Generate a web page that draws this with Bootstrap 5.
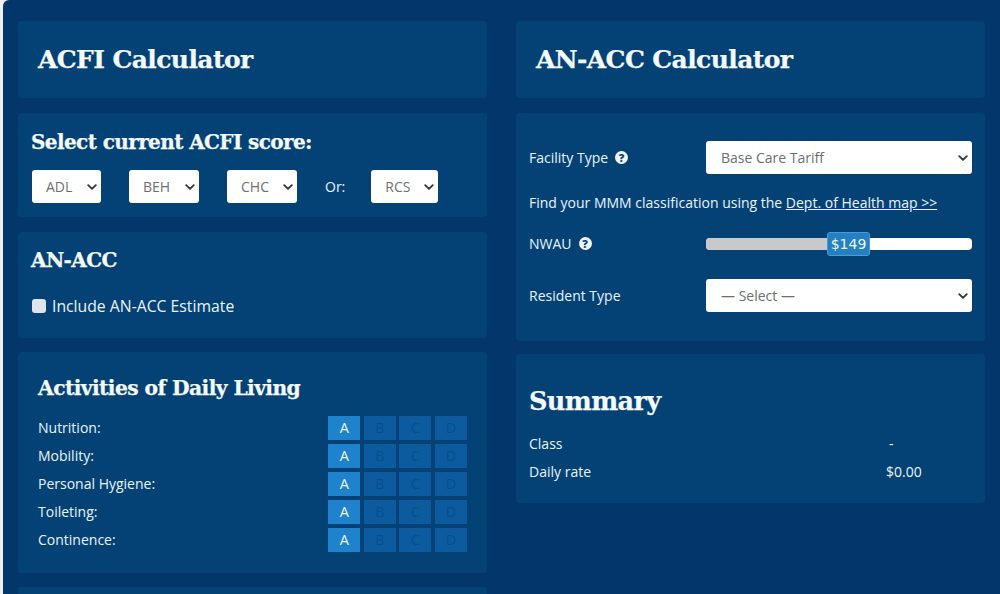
<!doctype html>
<html lang="en"><head><meta charset="utf-8"><title>Calculator</title>
<link href="https://cdn.jsdelivr.net/npm/bootstrap@5.3.0/dist/css/bootstrap.min.css" rel="stylesheet">
<style>
html,body{height:594px;overflow:hidden;background:#eef0f2}
body{font-family:"Open Sans",sans-serif;font-size:14px;color:#e8f4fb}
.shell{margin-left:3px;height:594px;background:#03366a;padding:21px 15px 0;border-top-left-radius:6px;overflow:hidden}
.cols{--bs-gutter-x:29px}
.pane{background:#044276;border-radius:4px;margin-bottom:15px}
.serif{font-family:"DejaVu Serif",Georgia,serif;font-weight:700;color:#f4fafd;margin:0;letter-spacing:-.6px;-webkit-text-stroke:.25px #f4fafd}
.pane-title{height:77px;padding:0 20px;display:flex;align-items:center}
.pane-title .serif{font-size:25px}
.pane-score{height:104px;padding:17px 14px 0}
.pane-score .serif{font-size:20px;line-height:24px;margin-left:-1px}
.pick-row{display:flex;align-items:center;gap:28px;margin-top:16px}
.form-select.pick,.form-select.wide{height:33px;font-size:14px;color:#6c6f72;border:0;border-radius:3px;background-image:url("data:image/svg+xml,%3csvg xmlns='http://www.w3.org/2000/svg' viewBox='0 0 16 12'%3e%3cpath fill='none' stroke='%23343a40' stroke-linecap='round' stroke-linejoin='round' stroke-width='3' d='m2 3 6 6 6-6'/%3e%3c/svg%3e");background-position:right 4px center;background-size:10px 8px}
.form-select.pick{padding:0 0 0 14px}
.w-a{width:69px}.w-b{width:70px}.w-c{width:67px}
.or-lbl{margin:0 -2px 0 0}
.pane-anacc{height:106px;margin-bottom:14px;padding:16px 14px 0}
.pane-anacc .serif{font-size:20px;line-height:24px;margin-left:-1px}
.check-row{display:flex;align-items:center;gap:6px;margin-top:23px;font-size:15.75px;line-height:22px}
.form-check-input.tick{width:14px;height:14px;margin:0;background-color:#dfe3ea;border:0;border-radius:3px;float:none}
.pane-adl{height:221px;margin-bottom:14px;padding:23px 20px 0}
.pane-adl .serif{font-size:20.3px;line-height:26px;margin-bottom:15px}
.adl-row{display:flex;justify-content:space-between;align-items:center;height:24px;margin-bottom:4px}
.adl-row>span{padding-bottom:2px}
.grades{display:grid;grid-template-columns:repeat(4,32px);gap:3.6px}
.grade{height:24px;display:flex;align-items:center;justify-content:center;background:#0b5b9e;color:#0a4f8c;font-size:14.5px}
.grade.on{background:#1e82cc;color:#eef8fd}
.pane-stub{height:40px;margin:0}
.pane-form{height:228px;margin-bottom:13px;padding:28px 13px 0}
.form-line{display:flex;align-items:center}
.form-lbl{width:177px;flex:none;display:flex;align-items:center;gap:7px}
.form-select.wide{padding:0 0 0 15px}
.form-lbl+.form-select{width:266px}
.hint{margin:18px 0 0;line-height:22px}
.hint a{color:#e8f4fb}
.line-nwau{margin-top:19px}
.line-res{margin-top:25px}
.help{width:13px;height:13px;border-radius:50%;background:#f2f8fb;color:#044276;font:800 11px/13px "Open Sans",sans-serif;text-align:center;display:inline-block}
.slider{position:relative;width:266px;height:12px;background:#fff;border-radius:4px}
.slider-fill{height:12px;background:#c8c9cb;border-radius:4px 0 0 4px}
.slider-tip{position:absolute;left:121px;top:-6px;width:43px;height:24px;background:#2580c3;border:1px solid #4a9ad6;border-radius:3px;color:#eef8fd;font:14px/22px "DejaVu Sans",sans-serif;text-align:center}
.pane-sum{height:149px;padding:29px 13px 0}
.pane-sum .serif{font-size:25.5px;line-height:36px;margin-bottom:10px}
.sum-row{display:flex;height:28px;align-items:center}
.sum-row span:first-child{width:357px}
.dash{padding-left:3px}
</style></head>
<body>
<div class="shell">
<div class="row cols">
  <div class="col-6">
    <div class="pane pane-title"><h1 class="serif">ACFI Calculator</h1></div>
    <div class="pane pane-score">
      <h2 class="serif">Select current ACFI score:</h2>
      <div class="pick-row ps-0">
        <select class="form-select pick w-a"><option>ADL</option></select>
        <select class="form-select pick w-b"><option>BEH</option></select>
        <select class="form-select pick w-b"><option>CHC</option></select>
        <p class="or-lbl">Or:</p>
        <select class="form-select pick w-c"><option>RCS</option></select>
      </div>
    </div>
    <div class="pane pane-anacc">
      <h2 class="serif">AN-ACC</h2>
      <label class="check-row"><input class="form-check-input tick" type="checkbox"> Include AN-ACC Estimate</label>
    </div>
    <div class="pane pane-adl">
      <h3 class="serif">Activities of Daily Living</h3>
      <div class="adl-row"><span>Nutrition:</span><div class="grades"><div class="grade on">A</div><div class="grade">B</div><div class="grade">C</div><div class="grade">D</div></div></div>
      <div class="adl-row"><span>Mobility:</span><div class="grades"><div class="grade on">A</div><div class="grade">B</div><div class="grade">C</div><div class="grade">D</div></div></div>
      <div class="adl-row"><span>Personal Hygiene:</span><div class="grades"><div class="grade on">A</div><div class="grade">B</div><div class="grade">C</div><div class="grade">D</div></div></div>
      <div class="adl-row"><span>Toileting:</span><div class="grades"><div class="grade on">A</div><div class="grade">B</div><div class="grade">C</div><div class="grade">D</div></div></div>
      <div class="adl-row"><span>Continence:</span><div class="grades"><div class="grade on">A</div><div class="grade">B</div><div class="grade">C</div><div class="grade">D</div></div></div>
    </div>
    <div class="pane pane-stub"></div>
  </div>
  <div class="col-6">
    <div class="pane pane-title"><h1 class="serif">AN-ACC Calculator</h1></div>
    <div class="pane pane-form">
      <div class="form-line"><span class="form-lbl">Facility Type <span class="help">?</span></span><select class="form-select wide"><option>Base Care Tariff</option></select></div>
      <p class="hint">Find your MMM classification using the <a href="#">Dept. of Health map &gt;&gt;</a></p>
      <div class="form-line line-nwau"><span class="form-lbl">NWAU <span class="help">?</span></span><div class="slider"><div class="slider-fill" style="width:50%"></div><div class="slider-tip">$149</div></div></div>
      <div class="form-line line-res"><span class="form-lbl">Resident Type</span><select class="form-select wide"><option>— Select —</option></select></div>
    </div>
    <div class="pane pane-sum">
      <h2 class="serif">Summary</h2>
      <div class="sum-row"><span>Class</span><span class="dash">-</span></div>
      <div class="sum-row"><span>Daily rate</span><span>$0.00</span></div>
    </div>
  </div>
</div>
</div>
<script src="https://cdn.jsdelivr.net/npm/bootstrap@5.3.0/dist/js/bootstrap.bundle.min.js"></script>
</body></html>
